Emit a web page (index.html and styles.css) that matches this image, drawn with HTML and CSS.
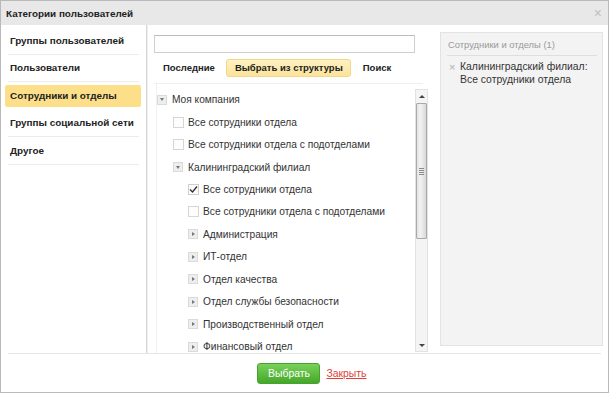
FILE: index.html
```html
<!DOCTYPE html>
<html lang="ru">
<head>
<meta charset="utf-8">
<title>Категории пользователей</title>
<link rel="stylesheet" href="styles.css">
</head>
<body>
<div class="dialog">
  <div class="header">
    <span class="title">Категории пользователей</span>
    <span class="close">×</span>
  </div>
  <div class="body">
    <div class="left">
      <div class="menu-item">Группы пользователей</div>
      <div class="menu-item">Пользователи</div>
      <div class="menu-item active">Сотрудники и отделы</div>
      <div class="menu-item">Группы социальной сети</div>
      <div class="menu-item">Другое</div>
    </div>
    <div class="middle">
      <div class="search"></div>
      <div class="tabs">
        <span class="tab">Последние</span>
        <span class="tab selected">Выбрать из структуры</span>
        <span class="tab">Поиск</span>
      </div>
      <div class="tree-wrap">
        <div class="tree">
          <div class="row l0"><span class="toggle open"></span><span>Моя компания</span></div>
          <div class="row l1"><span class="check"></span><span>Все сотрудники отдела</span></div>
          <div class="row l1"><span class="check"></span><span>Все сотрудники отдела с подотделами</span></div>
          <div class="row l1"><span class="toggle open"></span><span>Калининградский филиал</span></div>
          <div class="row l2"><span class="check checked"><svg width="9" height="9" viewBox="0 0 9 9"><path d="M1 4.5 L3.5 7 L8 1.5" fill="none" stroke="#333" stroke-width="1.4"/></svg></span><span>Все сотрудники отдела</span></div>
          <div class="row l2"><span class="check"></span><span>Все сотрудники отдела с подотделами</span></div>
          <div class="row l2"><span class="toggle"></span><span>Администрация</span></div>
          <div class="row l2"><span class="toggle"></span><span>ИТ-отдел</span></div>
          <div class="row l2"><span class="toggle"></span><span>Отдел качества</span></div>
          <div class="row l2"><span class="toggle"></span><span>Отдел службы безопасности</span></div>
          <div class="row l2"><span class="toggle"></span><span>Производственный отдел</span></div>
          <div class="row l2"><span class="toggle"></span><span>Финансовый отдел</span></div>
        </div>
        <div class="scrollbar">
          <div class="sb-btn"><span class="arr up"></span></div>
          <div class="sb-thumb"><span class="grip"></span></div>
          <div class="sb-space"></div>
          <div class="sb-btn"><span class="arr down"></span></div>
        </div>
      </div>
    </div>
    <div class="right">
      <div class="right-title">Сотрудники и отделы (1)</div>
      <div class="sel-item"><span class="sel-x">×</span><span class="sel-text">Калининградский филиал:<br>Все сотрудники отдела</span></div>
    </div>
  </div>
  <div class="footer">
    <span class="btn-ok">Выбрать</span>
    <a class="link-close" href="#">Закрыть</a>
  </div>
</div>
</body>
</html>
```
FILE: styles.css
```css
* { box-sizing: border-box; }
html, body { margin: 0; padding: 0; background: #fff; }
body { font-family: "Liberation Sans", Arial, sans-serif; font-size: 10.2px; color: #333; }

.dialog {
  width: 609px;
  height: 393px;
  border: 1px solid #b9b9b9;
  display: flex;
  flex-direction: column;
  background: #fff;
}

.header {
  height: 24px;
  background: #e8e8e8;
  display: flex;
  align-items: center;
  justify-content: space-between;
  padding: 0 6px 0 5px;
  flex: none;
}
.title { font-weight: bold; font-size: 9.9px; color: #222; }
.close { color: #c0c0c0; font-size: 14px; line-height: 1; }

.body {
  height: 328px;
  display: flex;
  flex: none;
}

.left {
  width: 146px;
  border-right: 1px solid #d6d6d6;
  padding-top: 2px;
  flex: none;
}
.menu-item {
  height: 27.5px;
  margin: 0 7px 0 7px;
  padding-left: 2px;
  display: flex;
  align-items: center;
  font-weight: bold;
  font-size: 9.9px;
  color: #222;
  border-bottom: 1px solid #ececec;
}
.menu-item.active {
  height: 22px;
  margin: 2.5px 5px 3px 4px;
  padding-left: 5px;
  background: #fddf8a;
  border-bottom: none;
  border-radius: 2px;
}

.middle {
  width: 288px;
  border-left: 1px solid #efefef;
  display: flex;
  flex-direction: column;
  flex: none;
}
.search {
  margin: 10px 0 0 6px;
  width: 261px;
  height: 18px;
  border: 1px solid #cfcfcf;
  border-top-color: #bdbdbd;
  background: #fff;
}
.tabs {
  margin: 6px 12px 0 6px;
  padding-bottom: 6px;
  border-bottom: 1px solid #eeeeee;
  display: flex;
  gap: 3px;
}
.tab {
  height: 18px;
  line-height: 16px;
  padding: 0 7px 0 8px;
  border: 1px solid transparent;
  font-weight: bold;
  font-size: 9.5px;
  color: #222;
}
.tab.selected {
  background: linear-gradient(#fef1c3, #fbe39a);
  border-color: #f0d78a;
  border-radius: 3px;
}

.tree-wrap {
  flex: 1;
  display: flex;
  overflow: hidden;
  margin-left: 8px;
}
.tree {
  width: 259px;
  padding-top: 4.5px;
  border-left: 1px solid #f0f0f0;
  overflow: hidden;
  flex: none;
}
.row {
  height: 22.45px;
  display: flex;
  align-items: center;
  white-space: nowrap;
  color: #333;
}
.row.l0 { padding-left: 0; }
.row.l1 { padding-left: 16px; }
.row.l2 { padding-left: 31px; }

.toggle {
  width: 10px;
  height: 10px;
  margin-right: 5px;
  background: #eeeeee;
  border: 1px solid #dadada;
  display: flex;
  align-items: center;
  justify-content: center;
  flex: none;
}
.toggle::after {
  content: "";
  width: 0;
  height: 0;
  border-top: 2px solid transparent;
  border-bottom: 2px solid transparent;
  border-left: 3px solid #777;
  margin-left: 1px;
}
.toggle.open::after {
  border-left: 2px solid transparent;
  border-right: 2px solid transparent;
  border-top: 3px solid #777;
  border-bottom: none;
  margin-left: 0;
}
.check {
  width: 11px;
  height: 11px;
  margin-right: 4px;
  border: 1px solid #d6d6d6;
  background: #fdfdfd;
  display: flex;
  align-items: center;
  justify-content: center;
  flex: none;
}
.check.checked { border-color: #cfcfcf; }

.scrollbar {
  width: 13px;
  margin-top: 5px;
  margin-bottom: 1px;
  background: #f4f4f4;
  border: 1px solid #e2e2e2;
  display: flex;
  flex-direction: column;
  flex: none;
}
.sb-btn {
  height: 12px;
  display: flex;
  align-items: center;
  justify-content: center;
  flex: none;
}
.arr { width: 0; height: 0; border-left: 3px solid transparent; border-right: 3px solid transparent; }
.arr.up { border-bottom: 3px solid #444; }
.arr.down { border-top: 3px solid #444; }
.sb-thumb {
  height: 136px;
  margin: 1px 0 0 0;
  background: linear-gradient(to right, #e4e4e4, #f2f2f2 40%, #d8d8d8);
  border: 1px solid #a9a9a9;
  border-radius: 1px;
  display: flex;
  align-items: center;
  justify-content: center;
  flex: none;
}
.grip {
  width: 5px;
  height: 7px;
  background: repeating-linear-gradient(#8a8a8a 0 1px, transparent 1px 2px);
}
.sb-space { flex: 1; }

.right {
  width: 163px;
  margin: 7px 5px 7px 5px;
  background: #f3f3f3;
  border: 1px solid #e3e3e3;
  padding: 0 5px 0 6px;
  flex: none;
}
.right-title {
  height: 23px;
  line-height: 24px;
  color: #9a9a9a;
  font-size: 9.4px;
  padding-left: 1px;
  border-bottom: 1px solid #dedede;
}
.sel-item {
  display: flex;
  padding-top: 5px;
  padding-left: 2px;
}
.sel-x { color: #b0b0b0; font-size: 11px; line-height: 13px; width: 11px; flex: none; }
.sel-text { line-height: 12.5px; color: #333; font-size: 10.4px; }

.footer {
  flex: 1;
  margin: 0 7px;
  border-top: 1px solid #e6e6e6;
  display: flex;
  align-items: center;
  justify-content: center;
  gap: 6px;
  padding-left: 15px;
}
.btn-ok {
  width: 63px;
  height: 21px;
  line-height: 20px;
  text-align: center;
  color: #fff;
  background: linear-gradient(#79d25a, #45a72a);
  border: 1px solid #48a32d;
  border-radius: 3px;
  font-size: 10.4px;
}
.link-close { color: #e0403a; text-decoration: underline; font-size: 10.4px; }
```
